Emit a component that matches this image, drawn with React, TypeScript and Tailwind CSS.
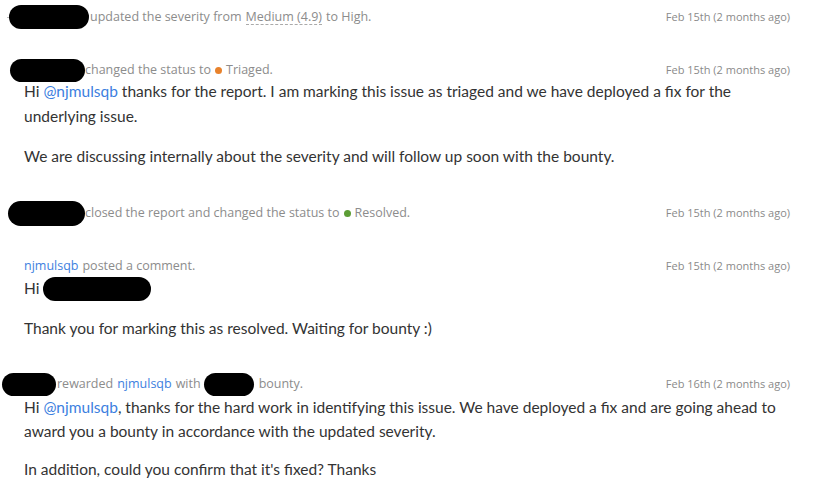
import React from 'react';

const Blob = ({ className }: { className: string }) => (
  <span className={`inline-block bg-black rounded-full align-middle ${className}`} />
);

const Meta = ({ children, date }: { children: React.ReactNode; date: string }) => (
  <div className="flex items-center justify-between text-[12.5px] text-[#8c8c8c] font-['Open_Sans',sans-serif] h-[24px]">
    <div className="flex items-center whitespace-nowrap">{children}</div>
    <span className="text-[11px] text-[#8a8a8a] pr-[23px]">{date}</span>
  </div>
);

const Mention = ({ children }: { children: React.ReactNode }) => (
  <span className="text-[#3d7fe0]">{children}</span>
);

const Dot = ({ color }: { color: string }) => (
  <span className={`inline-block w-[7px] h-[7px] rounded-full mx-[4px] ${color}`} />
);

export default function App() {
  return (
    <div className="w-[813px] h-[493px] bg-white overflow-hidden pl-[24px] pt-[5px] font-['Lato',sans-serif]">
      {/* severity update */}
      <Meta date="Feb 15th (2 months ago)">
        <span className="w-[4px] h-px bg-[#bbb] -ml-[17px] mr-[2px]" />
        <Blob className="w-[80px] h-[24px] -ml-[4px]" />
        <span className="ml-px">updated the severity from</span>
        <span className="ml-1 border-b border-dashed border-[#aaa] leading-[14px]">Medium (4.9)</span>
        <span className="ml-1">to High.</span>
      </Meta>

      {/* triaged */}
      <div className="mt-[29px]">
        <Meta date="Feb 15th (2 months ago)">
          <Blob className="w-[75px] h-[23px] -ml-[14px]" />
          <span>changed the status to</span>
          <Dot color="bg-[#e8822c]" />
          <span>Triaged.</span>
        </Meta>
        <div className="-mt-[3px] text-[15.5px] text-[#333] leading-[25px] pr-[60px]">
          <p>
            Hi <Mention>@njmulsqb</Mention> thanks for the report. I am marking this issue as triaged and we have deployed a fix for the
            underlying issue.
          </p>
          <p className="mt-[15px]">We are discussing internally about the severity and will follow up soon with the bounty.</p>
        </div>
      </div>

      {/* resolved */}
      <div className="mt-[32px]">
        <Meta date="Feb 15th (2 months ago)">
          <Blob className="w-[77px] h-[25px] -ml-[16px]" />
          <span>closed the report and changed the status to</span>
          <Dot color="bg-[#5c9d35]" />
          <span>Resolved.</span>
        </Meta>
      </div>

      {/* comment */}
      <div className="mt-[29px]">
        <Meta date="Feb 15th (2 months ago)">
          <Mention>njmulsqb</Mention>
          <span className="ml-1">posted a comment.</span>
        </Meta>
        <div className="-mt-[2px] text-[15.5px] text-[#333] leading-[25px]">
          <p className="flex items-center">
            Hi <Blob className="w-[108px] h-[24px] ml-[4px]" />
          </p>
          <p className="mt-[15px]">Thank you for marking this as resolved. Waiting for bounty :)</p>
        </div>
      </div>

      {/* bounty */}
      <div className="mt-[31px]">
        <Meta date="Feb 16th (2 months ago)">
          <Blob className="w-[54px] h-[23px] -ml-[22px] mr-px" />
          <span>rewarded</span>
          <span className="ml-1"><Mention>njmulsqb</Mention></span>
          <span className="ml-1">with</span>
          <Blob className="w-[50px] h-[23px] ml-[3px] mr-[5px]" />
          <span>bounty.</span>
        </Meta>
        <div className="-mt-[1px] text-[15.5px] text-[#333] leading-[24px] pr-[10px]">
          <p>
            Hi <Mention>@njmulsqb</Mention>, thanks for the hard work in identifying this issue. We have deployed a fix and are going ahead to
            award you a bounty in accordance with the updated severity.
          </p>
          <p className="mt-[14px]">In addition, could you confirm that it's fixed? Thanks</p>
        </div>
      </div>
    </div>
  );
}
